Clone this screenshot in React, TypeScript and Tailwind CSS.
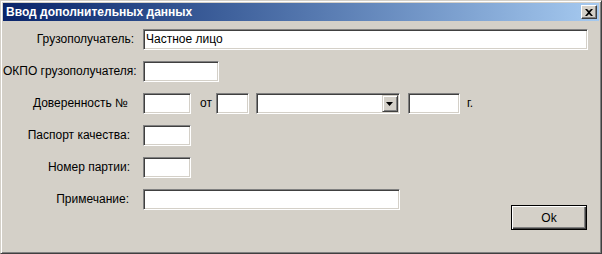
import type { ReactNode } from "react";

const font = { fontFamily: '"Liberation Sans", Arial, sans-serif' };

function Field({ w, value }: { w: string; value?: string }) {
  return (
    <div
      className={
        "h-[21px] shrink-0 border border-t-[#808080] border-l-[#808080] border-b-white border-r-white bg-white pl-[2px] text-[12px] leading-[19px] text-black shadow-[inset_1px_1px_0_#404040,inset_-1px_-1px_0_#d4d0c8] " +
        w
      }
    >
      {value}
    </div>
  );
}

function Row({ label, pr, children }: { label: string; pr: string; children: ReactNode }) {
  return (
    <div className="flex items-start">
      <div className={"w-[140px] shrink-0 whitespace-nowrap text-right text-[12px] leading-[21px] text-black " + pr}>{label}</div>
      {children}
    </div>
  );
}

export default function App() {
  return (
    <div
      style={font}
      className="flex h-[254px] w-[602px] flex-col border border-t-[#d4d0c8] border-l-[#d4d0c8] border-b-[#404040] border-r-[#404040] bg-[#d4d0c8] p-[2px] shadow-[inset_1px_1px_0_#fff,inset_-1px_-1px_0_#808080]"
    >
      <div className="flex h-[18px] shrink-0 items-center bg-gradient-to-r from-[#0a246a] to-[#a6caf0] pl-[3px] pr-[2px]">
        <span className="text-[12px] font-bold leading-none text-white">Ввод дополнительных данных</span>
        <button className="ml-auto flex h-[14px] w-[16px] items-center justify-center border border-t-white border-l-white border-b-[#404040] border-r-[#404040] bg-[#d4d0c8] shadow-[inset_-1px_-1px_0_#808080]">
          <svg width="8" height="7" viewBox="0 0 8 7">
            <path d="M0 0h2l2 2 2-2h2L5 3.5 8 7H6L4 5 2 7H0l3-3.5z" fill="#000" />
          </svg>
        </button>
      </div>

      <div className="flex flex-col gap-[11px] pt-[8px] pr-[12px]">
        <Row label="Грузополучатель:" pr="pr-[9px]">
          <Field w="w-[445px]" value="Частное лицо" />
        </Row>
        <Row label="ОКПО грузополучателя:" pr="pr-[9px]">
          <Field w="w-[76px]" />
        </Row>
        <Row label="Доверенность №" pr="pr-[15px]">
          <Field w="w-[48px]" />
          <span className="ml-[9px] text-[12px] leading-[21px]">от</span>
          <div className="ml-[4px]">
            <Field w="w-[33px]" />
          </div>
          <div className="ml-[7px] flex h-[21px] w-[144px] shrink-0 items-center justify-end border border-t-[#808080] border-l-[#808080] border-b-white border-r-white bg-white pr-px shadow-[inset_1px_1px_0_#404040,inset_-1px_-1px_0_#d4d0c8]">
            <div className="flex h-[17px] w-[16px] items-center justify-center border border-t-[#d4d0c8] border-l-[#d4d0c8] border-b-[#404040] border-r-[#404040] bg-[#d4d0c8] shadow-[inset_1px_1px_0_#fff,inset_-1px_-1px_0_#808080]">
              <svg width="7" height="4" viewBox="0 0 7 4">
                <path d="M0 0h7L3.5 4z" fill="#000" />
              </svg>
            </div>
          </div>
          <div className="ml-[8px]">
            <Field w="w-[52px]" />
          </div>
          <span className="ml-[7px] text-[12px] leading-[21px]">г.</span>
        </Row>
        <Row label="Паспорт качества:" pr="pr-[13px]">
          <Field w="w-[48px]" />
        </Row>
        <Row label="Номер партии:" pr="pr-[13px]">
          <Field w="w-[48px]" />
        </Row>
        <Row label="Примечание:" pr="pr-[14px]">
          <Field w="w-[257px]" />
          <button className="ml-auto mt-[16px] h-[25px] w-[76px] border border-black bg-[#d4d0c8] text-[12px] text-black shadow-[inset_1px_1px_0_#fff,inset_-1px_-1px_0_#404040,inset_-2px_-2px_0_#808080]">
            Ok
          </button>
        </Row>
      </div>
    </div>
  );
}
